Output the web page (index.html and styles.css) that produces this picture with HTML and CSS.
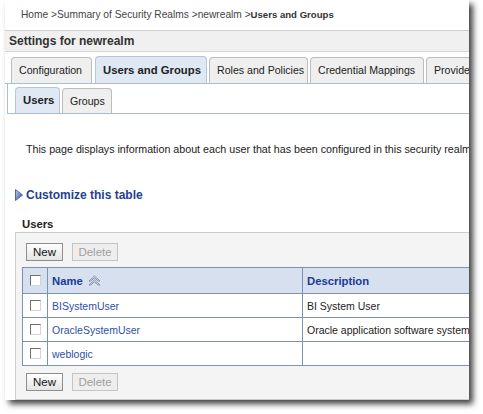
FILE: index.html
```html
<!DOCTYPE html>
<html>
<head>
<meta charset="utf-8">
<link rel="stylesheet" href="styles.css">
</head>
<body>
<div class="window">
  <div class="breadcrumb">Home &gt;Summary of Security Realms &gt;newrealm &gt;<b>Users and Groups</b></div>
  <div class="settings">Settings for newrealm</div>
  <div class="tabs">
    <div class="tab t-config">Configuration</div>
    <div class="tab active t-users">Users and Groups</div>
    <div class="tab t-roles">Roles and Policies</div>
    <div class="tab t-cred">Credential Mappings</div>
    <div class="tab t-prov">Providers</div>
  </div>
  <div class="subpanel">
    <div class="subtab active">Users</div>
    <div class="subtab sub-groups">Groups</div>
  </div>
  <p class="intro">This page displays information about each user that has been configured in this security realm.</p>
  <div class="customize">
    <svg class="tri" width="8" height="12" viewBox="0 0 8 12">
      <defs>
        <linearGradient id="g" x1="0" y1="0" x2="1" y2="1">
          <stop offset="0" stop-color="#c3d1ea"/>
          <stop offset="1" stop-color="#2c4e9a"/>
        </linearGradient>
      </defs>
      <polygon points="0.5,0.5 7.5,6 0.5,11.5" fill="url(#g)" stroke="#4a67a8" stroke-width="1"/>
    </svg>
    <span>Customize this table</span>
  </div>
  <div class="label">Users</div>
  <div class="panel">
    <div class="buttons">
      <span class="btn b-new">New</span>
      <span class="btn b-del disabled">Delete</span>
    </div>
    <table class="grid">
      <tr class="head">
        <th class="c-chk"><span class="chk"></span></th>
        <th class="c-name">Name<svg class="sort" width="13" height="11" viewBox="0 0 13 11">
            <path d="M1 6 L6.5 1 L12 6 L10.3 6 L6.5 2.8 L2.7 6 Z" fill="#f4f6fa" stroke="#7f8ca4" stroke-width="1" stroke-linejoin="round"/>
            <path d="M1 10 L6.5 5 L12 10 L10.3 10 L6.5 6.8 L2.7 10 Z" fill="#f4f6fa" stroke="#7f8ca4" stroke-width="1" stroke-linejoin="round"/>
          </svg></th>
        <th class="c-desc">Description</th>
      </tr>
      <tr>
        <td class="c-chk"><span class="chk"></span></td>
        <td><a>BISystemUser</a></td>
        <td>BI System User</td>
      </tr>
      <tr>
        <td class="c-chk"><span class="chk"></span></td>
        <td><a>OracleSystemUser</a></td>
        <td>Oracle application software system user</td>
      </tr>
      <tr>
        <td class="c-chk"><span class="chk"></span></td>
        <td><a>weblogic</a></td>
        <td></td>
      </tr>
    </table>
    <div class="buttons bottom">
      <span class="btn b-new">New</span>
      <span class="btn b-del disabled">Delete</span>
    </div>
  </div>
</div>
</body>
</html>
```

FILE: styles.css
```css
html, body {
  margin: 0;
  padding: 0;
  background: #fff;
}
body {
  width: 483px;
  height: 414px;
  overflow: hidden;
  font-family: "Liberation Sans", Arial, sans-serif;
  font-size: 11px;
  color: #222;
}
.window {
  margin-left: 5px;
  width: 464px;
  height: 400px;
  background: #fff;
  box-shadow: 4px 4px 6px rgba(0, 0, 0, 0.75);
  overflow: hidden;
}
.breadcrumb {
  height: 30px;
  line-height: 30px;
  padding-left: 16px;
  font-size: 10.2px;
  color: #444;
  border-bottom: 1px solid #cfcfcf;
  white-space: nowrap;
}
.breadcrumb b {
  font-size: 9.6px;
  color: #333;
}
.settings {
  height: 20px;
  line-height: 20px;
  padding-left: 4px;
  background: #f0f0f0;
  border-bottom: 1px solid #d8d8d8;
  font-weight: bold;
  font-size: 12px;
  color: #333;
}
.tabs {
  display: flex;
  align-items: flex-end;
  gap: 2px;
  margin-top: 4px;
  padding-left: 6px;
  height: 27px;
  border-bottom: 1px solid #a9bdd3;
  white-space: nowrap;
  font-size: 10.6px;
}
.tab {
  flex: none;
  box-sizing: border-box;
  height: 26px;
  line-height: 24px;
  padding: 0 7px;
  background: #efefef;
  border: 1px solid #bdbdbd;
  border-bottom: none;
  border-radius: 4px 4px 0 0;
  color: #222;
}
.tab.active {
  height: 27px;
  background: #dfe8f3;
  border-color: #b4c6da;
  font-weight: bold;
  font-size: 11.3px;
  line-height: 26px;
}
.t-config { width: 81px; }
.t-users { width: 112px; margin-left: 1px; }
.t-roles { width: 99px; }
.t-cred { width: 114px; }
.t-prov { width: 90px; }
.subpanel {
  display: flex;
  align-items: flex-end;
  gap: 2px;
  margin-left: 2px;
  height: 29px;
  padding-left: 7px;
  border-left: 1px solid #a9bdd3;
  border-bottom: 1px solid #a9bdd3;
  font-size: 10.6px;
}
.subtab {
  box-sizing: border-box;
  height: 25px;
  line-height: 24px;
  padding: 0 7px;
  background: #efefef;
  border: 1px solid #bdbdbd;
  border-bottom: none;
  border-radius: 4px 4px 0 0;
}
.subtab.active {
  width: 45px;
  height: 26px;
  background: #dfe8f3;
  border-color: #b4c6da;
  font-weight: bold;
  font-size: 11.3px;
  line-height: 25px;
}
.sub-groups { width: 50px; }
.intro {
  margin: 27px 0 0 21px;
  font-size: 10.7px;
  line-height: 16px;
  white-space: nowrap;
  color: #222;
}
.customize {
  display: flex;
  align-items: center;
  gap: 3px;
  margin: 30px 0 0 10px;
  height: 16px;
  font-weight: bold;
  font-size: 12px;
  color: #1f4191;
}
.tri { flex: none; }
.label {
  margin: 13px 0 0 17px;
  font-weight: bold;
  font-size: 11.3px;
  height: 16px;
  line-height: 16px;
  color: #222;
}
.panel {
  margin: 0 0 0 10px;
  width: 520px;
  height: 168px;
  box-sizing: border-box;
  background: #f4f4f4;
  border: 1px solid #cdcdcd;
  padding: 10px 0 0 6px;
}
.buttons {
  display: flex;
  gap: 9px;
  padding-left: 4px;
  height: 18px;
}
.buttons.bottom { margin-top: 7px; }
.btn {
  box-sizing: border-box;
  height: 18px;
  line-height: 16px;
  text-align: center;
  font-size: 11.5px;
  color: #111;
  background: linear-gradient(#ffffff, #e4e4e4);
  border: 1px solid #8e8e8e;
}
.b-new { width: 37px; }
.b-del { width: 46px; }
.btn.disabled {
  color: #a0a0a0;
  background: #eeeeee;
  border-color: #c4c4c4;
}
.grid {
  margin-top: 6px;
  border-collapse: collapse;
  width: 600px;
  background: #fff;
  font-size: 10.5px;
}
.grid th, .grid td {
  border: 1px solid #7d91b2;
  padding: 0 4px;
  text-align: left;
  white-space: nowrap;
  height: 23px;
}
.grid th {
  height: 25px;
  background: #d6e0ef;
  color: #1c3a96;
  font-weight: bold;
  font-size: 11.3px;
}
.c-chk { width: 16px; }
.c-name { width: 246px; }
.grid a { color: #2b51a6; }
.chk {
  display: block;
  width: 11px;
  height: 11px;
  box-sizing: border-box;
  background: #fff;
  border: 1px solid;
  border-color: #6f6f6f #d4d4d4 #d4d4d4 #6f6f6f;
  margin-left: 3px;
}
.sort {
  vertical-align: -1px;
  margin-left: 5px;
}
```
